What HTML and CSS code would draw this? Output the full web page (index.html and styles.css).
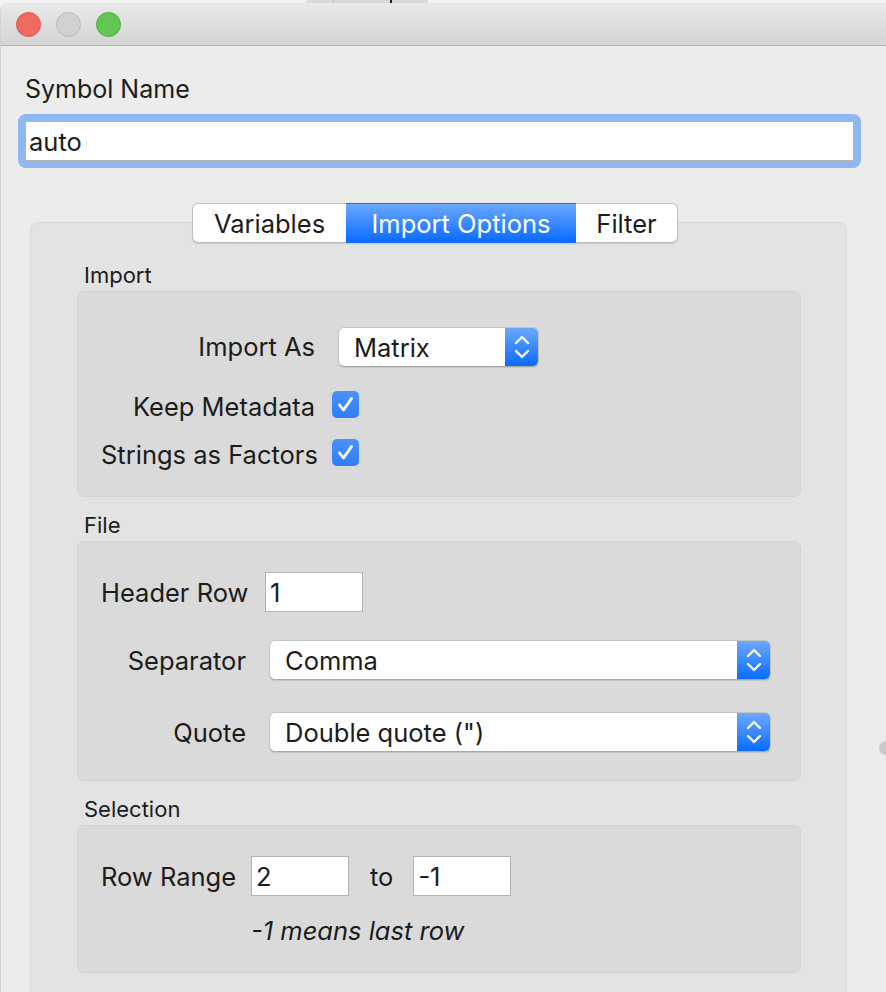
FILE: index.html
```html
<!DOCTYPE html>
<html>
<head>
<meta charset="utf-8">
<link rel="stylesheet" href="styles.css">
</head>
<body>
<div class="desk"><div class="behind"><span class="behind-sep"></span><span class="behind-mark"></span></div></div>
<div class="window">
  <div class="titlebar">
    <span class="light red"></span>
    <span class="light gray"></span>
    <span class="light green"></span>
  </div>
  <div class="content">
    <div class="field-label">Symbol Name</div>
    <div class="focus-ring"><div class="text-input big">auto</div></div>

    <div class="tabwidget">
      <div class="tabs">
        <div class="tab">Variables</div>
        <div class="tab active">Import Options</div>
        <div class="tab">Filter</div>
      </div>
      <div class="pane">
        <div class="group-title">Import</div>
        <div class="group import-group">
          <div class="row row-select">
            <div class="label lw1">Import As</div>
            <div class="select s-import"><span class="select-text">Matrix</span><span class="stepper"><svg width="20" height="28" viewBox="0 0 20 28"><path d="M4 10 L10 4 L16 10" fill="none" stroke="#fff" stroke-width="2.4" stroke-linecap="round" stroke-linejoin="round"/><path d="M4 18 L10 24 L16 18" fill="none" stroke="#fff" stroke-width="2.4" stroke-linecap="round" stroke-linejoin="round"/></svg></span></div>
          </div>
          <div class="row row-check first-check">
            <div class="label lw1 lowered">Keep Metadata</div>
            <span class="checkbox"><svg width="27" height="27" viewBox="0 0 27 27"><path d="M7.5 14 L11.5 19 L19.5 7.5" fill="none" stroke="#fff" stroke-width="2.8" stroke-linecap="round" stroke-linejoin="round"/></svg></span>
          </div>
          <div class="row row-check second-check">
            <div class="label lw1 lowered">Strings as Factors</div>
            <span class="checkbox"><svg width="27" height="27" viewBox="0 0 27 27"><path d="M7.5 14 L11.5 19 L19.5 7.5" fill="none" stroke="#fff" stroke-width="2.8" stroke-linecap="round" stroke-linejoin="round"/></svg></span>
          </div>
        </div>

        <div class="group-title">File</div>
        <div class="group file-group">
          <div class="row row40">
            <div class="label lw2 lowered-sm">Header Row</div>
            <div class="text-input small-input">1</div>
          </div>
          <div class="row row40 row-sep">
            <div class="label lw2 lowered-sm wide-gap">Separator</div>
            <div class="select s-wide"><span class="select-text">Comma</span><span class="stepper"><svg width="20" height="28" viewBox="0 0 20 28"><path d="M4 10 L10 4 L16 10" fill="none" stroke="#fff" stroke-width="2.4" stroke-linecap="round" stroke-linejoin="round"/><path d="M4 18 L10 24 L16 18" fill="none" stroke="#fff" stroke-width="2.4" stroke-linecap="round" stroke-linejoin="round"/></svg></span></div>
          </div>
          <div class="row row40 row-quote">
            <div class="label lw2 lowered-sm wide-gap">Quote</div>
            <div class="select s-wide"><span class="select-text">Double quote (")</span><span class="stepper"><svg width="20" height="28" viewBox="0 0 20 28"><path d="M4 10 L10 4 L16 10" fill="none" stroke="#fff" stroke-width="2.4" stroke-linecap="round" stroke-linejoin="round"/><path d="M4 18 L10 24 L16 18" fill="none" stroke="#fff" stroke-width="2.4" stroke-linecap="round" stroke-linejoin="round"/></svg></span></div>
          </div>
        </div>

        <div class="group-title">Selection</div>
        <div class="group sel-group">
          <div class="row row40">
            <div class="label lowered-sm range-label">Row Range</div>
            <div class="text-input small-input">2</div>
            <div class="label lowered-sm to-label">to</div>
            <div class="text-input small-input">-1</div>
          </div>
          <div class="hint">-1 means last row</div>
        </div>
      </div>
    </div>
  </div>
  <span class="handle"></span>
</div>
</body>
</html>
```

FILE: styles.css
```css
* { box-sizing: border-box; }
html, body { margin: 0; padding: 0; }
body {
  width: 886px;
  height: 992px;
  overflow: hidden;
  background: #f2f2f2;
  font-family: Inter, "Liberation Sans", sans-serif;
  color: #1c1c1c;
}
.desk { height: 3px; display: flex; }
.behind {
  margin-left: 306px;
  width: 122px;
  height: 3px;
  background: #dadada;
  display: flex;
}
.behind-sep { width: 1px; margin-left: 27px; background: #bdbdbd; }
.behind-mark { width: 2px; margin-left: 56px; background: #222; }

.window {
  position: relative;
  height: 989px;
  background: #ececec;
  border-left: 1px solid #d2d2d2;
  border-top-left-radius: 9px;
  overflow: hidden;
}
.titlebar {
  height: 43px;
  background: linear-gradient(#e9e9e9, #d4d4d4);
  border-bottom: 1px solid #b5b5b5;
  display: flex;
  align-items: center;
  padding-left: 15px;
  gap: 15px;
}
.light {
  width: 25px; height: 25px; border-radius: 50%;
  display: inline-block;
}
.red { background: #ef6b60; border: 1px solid #d5584d; }
.gray { background: #d1d1d1; border: 1px solid #b9b9b9; }
.green { background: #62c554; border: 1px solid #50ab42; }

.content { padding-top: 28px; }
.field-label {
  font-size: 25px;
  line-height: 30px;
  padding-left: 24px;
  height: 30px;
}
.focus-ring {
  margin-top: 10px;
  margin-left: 17px;
  width: 843px;
  height: 54px;
  border: 7px solid #8eb8ee;
  border-radius: 8px;
}
.text-input {
  background: #fff;
  border: 1px solid #b3b3b3;
  font-size: 25.5px;
  display: flex;
  align-items: center;
  padding-left: 4px;
}
.big { height: 40px; padding-left: 3px; }

.tabwidget { margin-top: 35px; }
.tabs {
  display: flex;
  justify-content: center;
  margin-left: 29px;
  width: 817px;
  height: 40px;
  margin-bottom: -21px;
  position: relative;
  z-index: 2;
  padding-right: 7px;
}
.tab {
  height: 40px;
  background: #fff;
  border: 1px solid #bdbdbd;
  font-size: 25.5px;
  display: flex;
  align-items: center;
  justify-content: center;
  box-shadow: 0 1px 1px rgba(0,0,0,0.12);
}
.tab:first-child { width: 154px; border-radius: 6px 0 0 6px; border-right: none; }
.tab:last-child { width: 102px; border-radius: 0 6px 6px 0; border-left: none; }
.tab.active {
  width: 230px;
  color: #fff;
  background: linear-gradient(#6ba8ff, #0a6bff);
  border-color: #1a72f5;
  border-left: none; border-right: none;
}

.pane {
  margin-left: 29px;
  width: 817px;
  height: 800px;
  background: #e3e3e3;
  border: 1px solid #dadada;
  border-radius: 7px;
  padding: 40px 45px 0 46px;
}
.group-title {
  font-size: 22px;
  line-height: 24px;
  height: 24px;
  padding-left: 7px;
  margin-bottom: 4px;
}
.group {
  width: 724px;
  background: #dadada;
  border: 1px solid #d2d2d2;
  border-radius: 7px;
  margin-bottom: 16px;
  padding-left: 23px;
}
.import-group { height: 206px; padding-top: 35px; }
.file-group { height: 240px; padding-top: 30px; }
.sel-group { height: 148px; padding-top: 30px; }

.row { display: flex; align-items: center; }
.row40 { height: 40px; }
.label { font-size: 25.5px; line-height: 30px; white-space: nowrap; }
.lw1 { width: 214px; text-align: right; margin-right: 23px; }
.lw2 { width: 145px; text-align: right; margin-right: 19px; }
.lw2.wide-gap { margin-right: 23px; }
.lowered { padding-top: 5px; }
.lowered-sm { padding-top: 2px; }
.row-select { height: 40px; }
.row-check { height: 27px; }
.first-check { margin-top: 24px; }
.second-check { margin-top: 21px; }
.row-check .lw1 { margin-right: 17px; }
.row-sep { margin-top: 28px; }
.row-quote { margin-top: 32px; }

.select {
  height: 40px;
  display: flex;
  background: #fff;
  border-radius: 6px;
  border: 1px solid #c4c4c4;
  border-bottom-color: #a9a9a9;
  box-shadow: 0 1px 1px rgba(0,0,0,0.1);
  overflow: hidden;
}
.s-import { width: 201px; }
.s-wide { width: 502px; }
.select-text {
  flex: 1;
  font-size: 25.5px;
  display: flex;
  align-items: center;
  padding-left: 15px;
}
.stepper {
  width: 33px;
  background: linear-gradient(#6ba8ff, #0a6bff);
  display: flex;
  align-items: center;
  justify-content: center;
}
.checkbox {
  width: 27px; height: 27px;
  border-radius: 5px;
  background: linear-gradient(#4b93fa, #2f7cf4);
  display: inline-flex;
}
.small-input { width: 98px; height: 40px; }
.range-label { width: 150px; }
.to-label { margin: 0 20px 0 21px; }
.hint {
  font-size: 25.5px;
  font-style: italic;
  margin-left: 150px;
  margin-top: 19px;
}
.handle {
  position: absolute;
  right: -7px;
  top: 738px;
  width: 14px;
  height: 14px;
  border-radius: 50%;
  background: #c9c9c9;
}
```
